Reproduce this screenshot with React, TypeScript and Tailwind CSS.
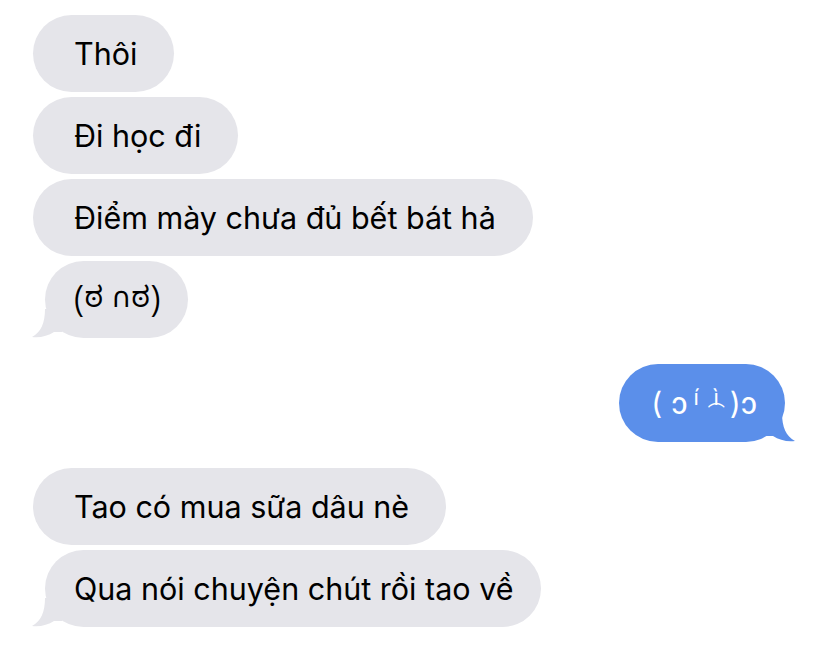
import React from 'react';

type Msg = {
  text: React.ReactNode;
  tail?: boolean;
  gapTop: string;
};

const GRAY = '#e5e5ea';
const BLUE = '#5b8fea';

function LeftTail() {
  return (
    <svg
      className="absolute left-[-13px] bottom-[-1px]"
      width="30"
      height="30"
      viewBox="0 0 30 30"
    >
      <path d="M13 0 C13 14 9 23 0 28 C8 29 16 27 22 23 L30 23 L30 0 Z" fill={GRAY} />
    </svg>
  );
}

function RightTail() {
  return (
    <svg
      className="absolute right-[-10px] bottom-[-1px]"
      width="30"
      height="30"
      viewBox="0 0 30 30"
    >
      <path d="M17 0 C17 14 21 23 30 28 C22 29 14 27 8 23 L0 23 L0 0 Z" fill={BLUE} />
    </svg>
  );
}

function GrayBubble({ text, tail, gapTop }: Msg) {
  return (
    <div className={`${gapTop} flex`}>
      <div
        className={`relative flex h-[77px] items-center rounded-[39px] bg-[#e5e5ea] text-[30.5px] leading-[36px] text-black ${
          tail ? 'ml-[45px] pl-[29px] pr-[28px]' : 'ml-[33px] pl-[41px] pr-[37px]'
        }`}
      >
        {tail && <LeftTail />}
        <span className="relative whitespace-nowrap">{text}</span>
      </div>
    </div>
  );
}

export default function App() {
  return (
    <div
      className="w-[828px] h-[646px] overflow-hidden bg-white pt-[15px]"
      style={{ fontFamily: 'Inter, "Liberation Sans", "Noto Sans", sans-serif' }}
    >
      <div className="flex flex-col">
        <GrayBubble gapTop="mt-0" text="Thôi" />
        <GrayBubble gapTop="mt-[5px]" text="Đi học đi" />
        <GrayBubble gapTop="mt-[5px]" text="Điểm mày chưa đủ bết bát hả" />
        <GrayBubble
          gapTop="mt-[5px]"
          tail
          text={
            <span
              className="text-[28px]"
              style={{ fontFamily: '"Noto Sans Kannada", "Noto Sans", "DejaVu Sans", sans-serif' }}
            >
              (ಠ ∩ಠ)
            </span>
          }
        />

        <div className="mt-[26px] flex justify-end">
          <div className="relative mr-[43px] flex h-[78px] items-center rounded-[39px] bg-[#5b8fea] pl-[32px] pr-[28px] text-[30px] leading-[36px] text-white">
            <RightTail />
            <span className="relative flex items-center whitespace-nowrap">
              <span>(</span>
              <span className="ml-[9px]">ɔ</span>
              <span className="ml-[6px] mb-[12px] text-[22px] leading-[22px]">í</span>
              <span className="ml-[9px] flex flex-col items-center">
                <span className="text-[22px] leading-[18px]">ì</span>
                <span
                  className="text-[17px] leading-[12px]"
                  style={{ fontFamily: '"DejaVu Sans", "Noto Sans CJK JP", sans-serif' }}
                >
                  ⌒
                </span>
              </span>
              <span className="ml-[5px]">)ɔ</span>
            </span>
          </div>
        </div>

        <GrayBubble gapTop="mt-[26px]" text="Tao có mua sữa dâu nè" />
        <GrayBubble gapTop="mt-[5px]" tail text="Qua nói chuyện chút rồi tao về" />
      </div>
    </div>
  );
}
